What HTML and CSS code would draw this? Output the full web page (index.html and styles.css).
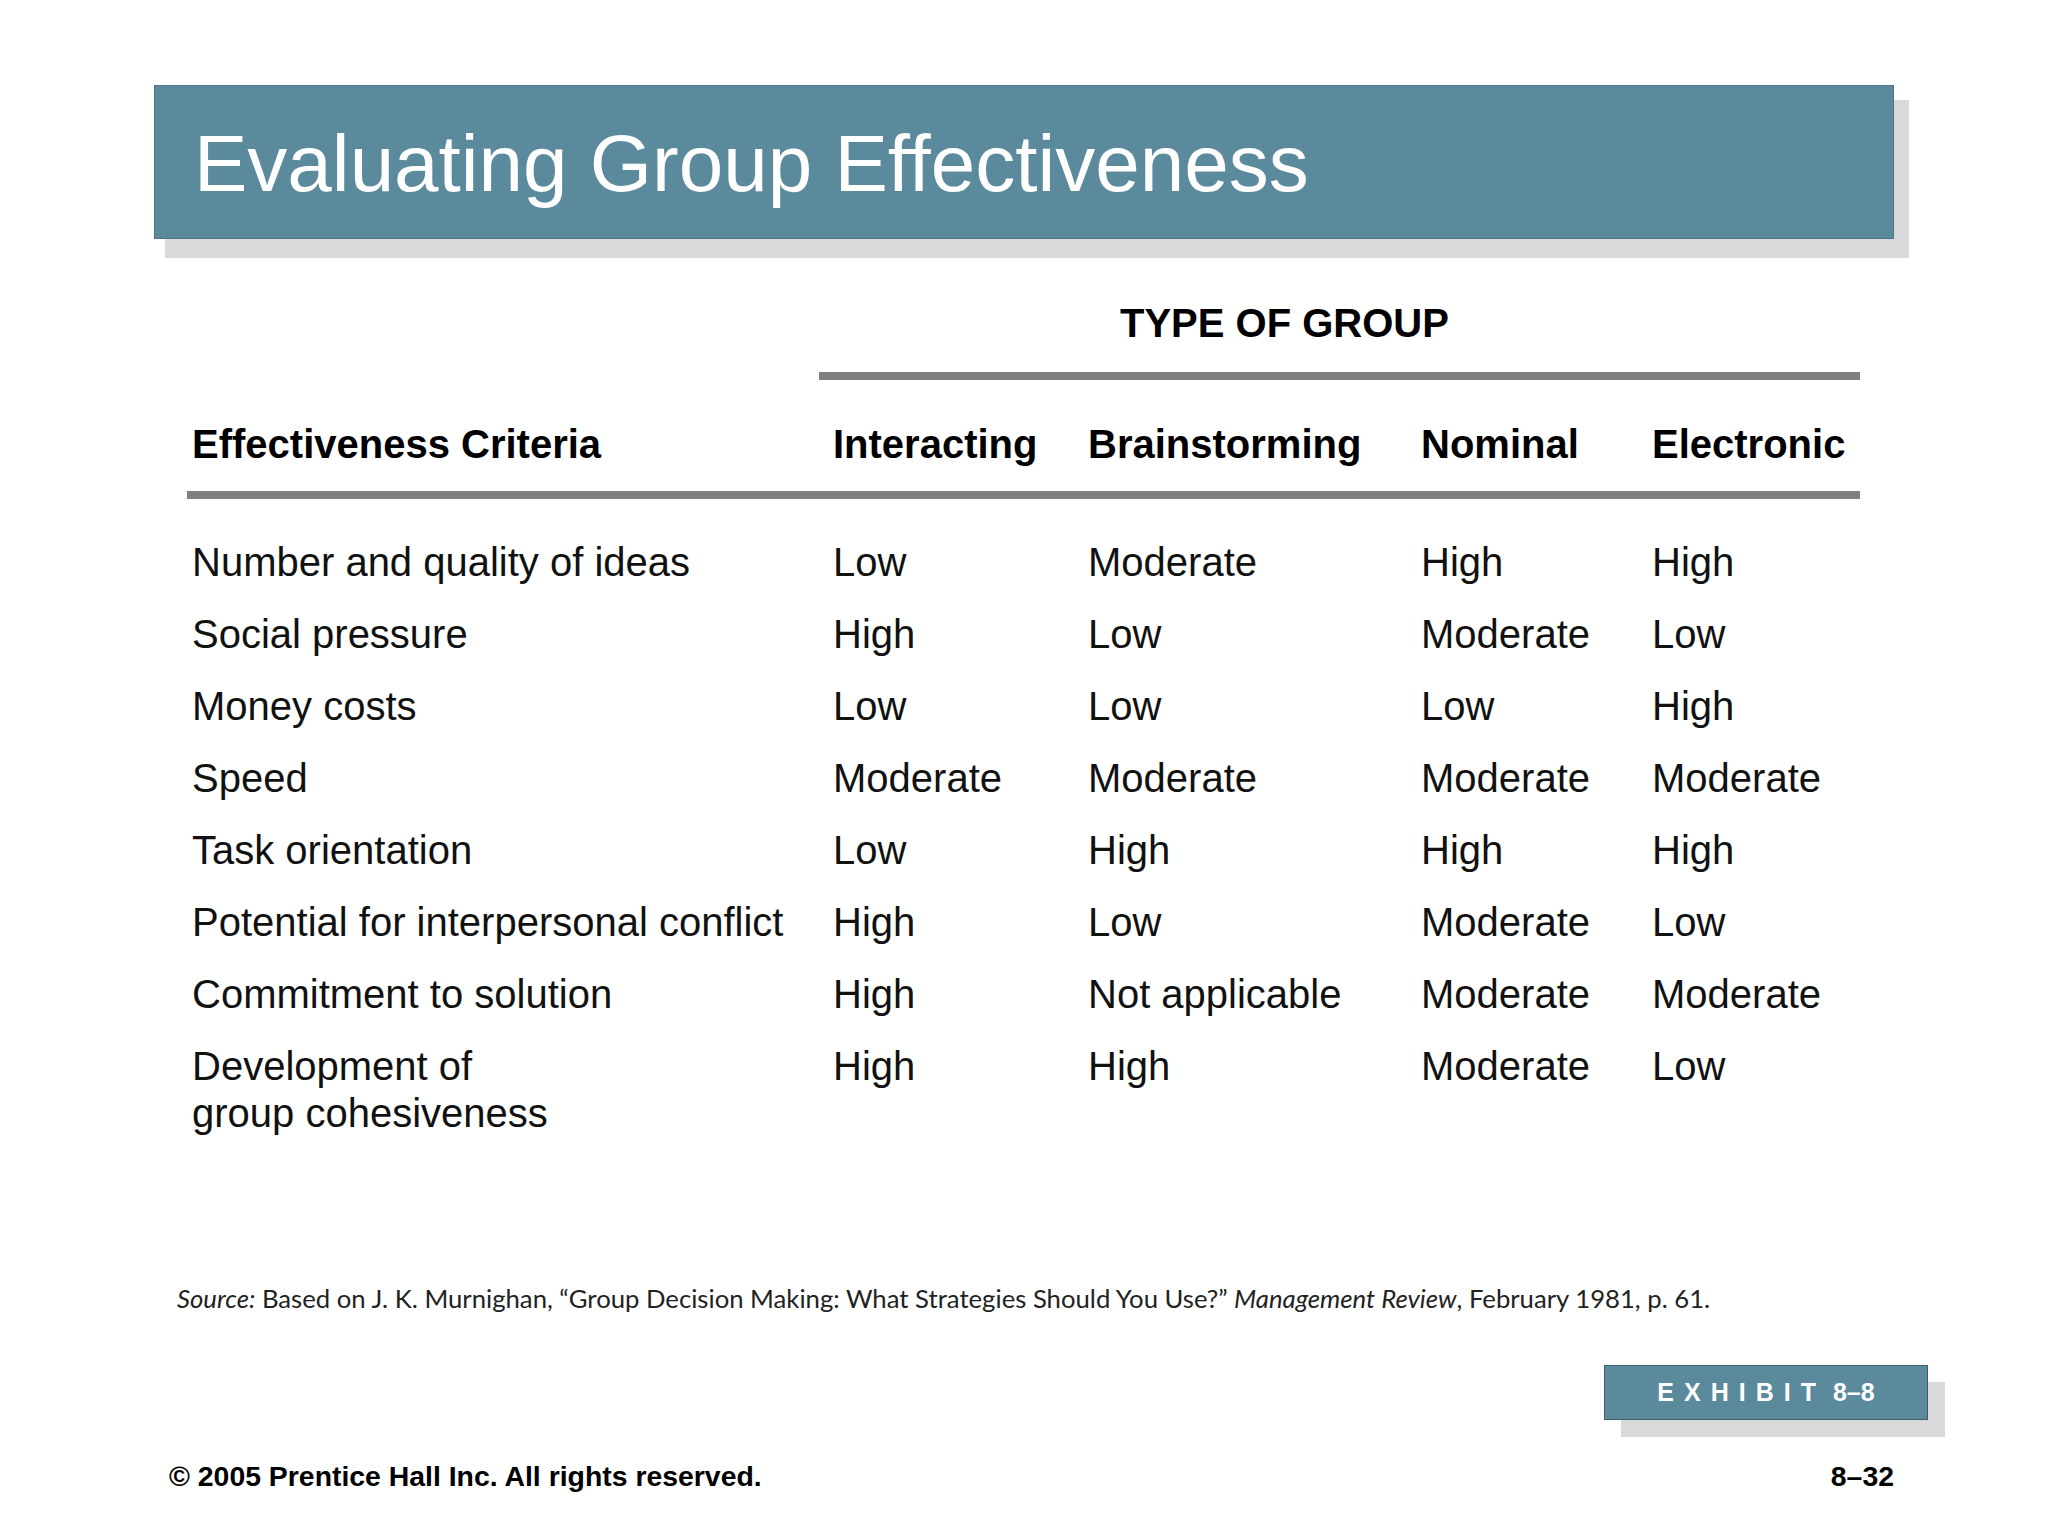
FILE: index.html
```html
<!DOCTYPE html>
<html lang="en">
<head>
<meta charset="utf-8">
<title>Evaluating Group Effectiveness</title>
<link rel="stylesheet" href="styles.css">
</head>
<body>
<div class="slide">
  <div class="title-bar"><h1 class="title">Evaluating Group Effectiveness</h1></div>

  <div class="table">
    <div class="group-head">
      <div class="group-title">TYPE OF GROUP</div>
      <div class="rule"></div>
    </div>

    <div class="grid head-row">
      <div>Effectiveness Criteria</div>
      <div>Interacting</div>
      <div>Brainstorming</div>
      <div>Nominal</div>
      <div>Electronic</div>
    </div>
    <div class="rule head-rule"></div>

    <div class="grid rows">
      <div>Number and quality of ideas</div><div>Low</div><div>Moderate</div><div>High</div><div>High</div>
      <div>Social pressure</div><div>High</div><div>Low</div><div>Moderate</div><div>Low</div>
      <div>Money costs</div><div>Low</div><div>Low</div><div>Low</div><div>High</div>
      <div>Speed</div><div>Moderate</div><div>Moderate</div><div>Moderate</div><div>Moderate</div>
      <div>Task orientation</div><div>Low</div><div>High</div><div>High</div><div>High</div>
      <div>Potential for interpersonal conflict</div><div>High</div><div>Low</div><div>Moderate</div><div>Low</div>
      <div>Commitment to solution</div><div>High</div><div>Not applicable</div><div>Moderate</div><div>Moderate</div>
      <div>Development of<br>group cohesiveness</div><div>High</div><div>High</div><div>Moderate</div><div>Low</div>
    </div>
  </div>

  <p class="source"><em>Source:</em> Based on J. K. Murnighan, “Group Decision Making: What Strategies Should You Use?” <em>Management Review</em>, February 1981, p. 61.</p>

  <div class="exhibit"><span class="exhibit-word">EXHIBIT</span> 8–8</div>

  <div class="footer">
    <span>© 2005 Prentice Hall Inc. All rights reserved.</span>
    <span>8–32</span>
  </div>
</div>
</body>
</html>
```
FILE: styles.css
```css
html, body {
  margin: 0;
  padding: 0;
  background: #ffffff;
}

body {
  width: 2048px;
  height: 1536px;
  overflow: hidden;
  font-family: "Liberation Sans", Arial, sans-serif;
  color: #000;
}

.slide {
  padding: 85px 0 0 150px;
}

.title-bar {
  margin-left: 4px;
  width: 1740px;
  height: 154px;
  box-sizing: border-box;
  background: #5b8a9d;
  border: 1px solid #4d7587;
  box-shadow: 13px 17px 0 2px #d9d9d9;
  display: flex;
  align-items: center;
  padding: 4px 0 0 39px;
}

.title {
  margin: 0;
  font-weight: normal;
  font-size: 80px;
  line-height: 1;
  color: #ffffff;
}

.table {
  margin-left: 37px;
  width: 1673px;
}

.group-head {
  margin-top: 61px;
  padding-left: 632px;
}

.group-title {
  font-weight: bold;
  font-size: 40px;
  line-height: 46px;
  padding-left: 301px;
}

.rule {
  height: 8px;
  background: #808080;
}

.group-head .rule {
  margin-top: 26px;
}

.grid {
  display: grid;
  grid-template-columns: 641px 255px 333px 231px 1fr;
  padding-left: 5px;
}

.head-row {
  margin-top: 41px;
  font-weight: bold;
  font-size: 40px;
  line-height: 46px;
}

.head-rule {
  margin-top: 24px;
}

.rows {
  margin-top: 40px;
  row-gap: 25px;
  font-size: 40px;
  line-height: 47px;
  color: #111;
}

.source {
  margin: 146px 0 0 27px;
  font-family: Lato, "Liberation Sans", sans-serif;
  font-size: 25.7px;
  line-height: 30px;
  color: #222;
}

.exhibit {
  margin: 52px 0 0 1454px;
  width: 324px;
  height: 55px;
  box-sizing: border-box;
  background: #5b8a9d;
  border: 1px solid #3f5f6e;
  box-shadow: 17px 17px 0 0 #d9d9d9;
  display: flex;
  align-items: center;
  justify-content: center;
  color: #fff;
  font-weight: bold;
  font-size: 25px;
  white-space: pre;
}

.exhibit-word {
  letter-spacing: 10px;
}

.footer {
  margin-top: 39px;
  width: 1744px;
  box-sizing: border-box;
  padding-left: 19px;
  display: flex;
  justify-content: space-between;
  font-weight: bold;
  font-size: 28.4px;
  line-height: 34px;
}
```
